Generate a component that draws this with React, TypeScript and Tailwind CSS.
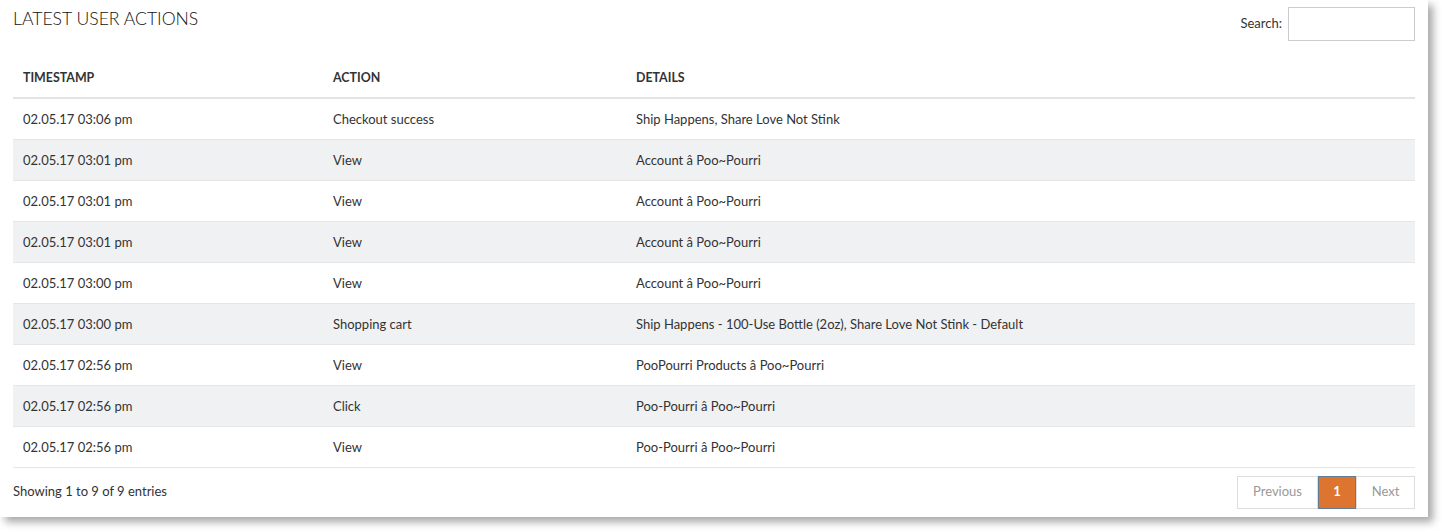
const rows = [
  ["02.05.17 03:06 pm", "Checkout success", "Ship Happens, Share Love Not Stink"],
  ["02.05.17 03:01 pm", "View", "Account â Poo~Pourri"],
  ["02.05.17 03:01 pm", "View", "Account â Poo~Pourri"],
  ["02.05.17 03:01 pm", "View", "Account â Poo~Pourri"],
  ["02.05.17 03:00 pm", "View", "Account â Poo~Pourri"],
  ["02.05.17 03:00 pm", "Shopping cart", "Ship Happens - 100-Use Bottle (2oz), Share Love Not Stink - Default"],
  ["02.05.17 02:56 pm", "View", "PooPourri Products â Poo~Pourri"],
  ["02.05.17 02:56 pm", "Click", "Poo-Pourri â Poo~Pourri"],
  ["02.05.17 02:56 pm", "View", "Poo-Pourri â Poo~Pourri"],
];

export default function App() {
  return (
    <div className="h-[532px] w-[1442px] bg-white font-['Lato',sans-serif] text-[13px] text-[#333]">
      <div className="h-[517px] w-[1428px] bg-white px-[13px] shadow-[5px_5px_8px_rgba(0,0,0,0.35)]">
        <div className="flex h-[41px] items-start justify-between">
          <h2 className="mt-[9px] text-[17.6px] font-light leading-[20px] text-[#111]">LATEST USER ACTIONS</h2>
          <label className="mt-[7px] flex items-center gap-[6px] text-[#333]">
            Search:
            <input className="h-[34px] w-[127px] border border-[#ccc] bg-white outline-none" />
          </label>
        </div>
        <table className="w-full border-collapse">
          <thead>
            <tr className="h-[57px] border-b-2 border-[#e3e3e3] text-left">
              <th className="w-[310px] px-[10px] pt-[19px] text-[12.4px] font-bold text-[#333]">TIMESTAMP</th>
              <th className="w-[303px] px-[10px] pt-[19px] text-[12.4px] font-bold text-[#333]">ACTION</th>
              <th className="px-[10px] pt-[19px] text-[12.4px] font-bold text-[#333]">DETAILS</th>
            </tr>
          </thead>
          <tbody>
            {rows.map((r, i) => (
              <tr key={i} className={`h-[41px] border-b border-[#e6e6e6] ${i % 2 === 1 ? "bg-[#f0f1f3]" : "bg-white"}`}>
                <td className="px-[10px] pt-[2px]">{r[0]}</td>
                <td className="px-[10px] pt-[2px]">{r[1]}</td>
                <td className="px-[10px] pt-[2px]">{r[2]}</td>
              </tr>
            ))}
          </tbody>
        </table>
        <div className="mt-[7px] flex items-center justify-between">
          <div>Showing 1 to 9 of 9 entries</div>
          <div className="flex h-[34px] pt-[1px] text-[13px]">
            <span className="flex w-[81px] items-center justify-center border border-[#ddd] text-[#999]">Previous</span>
            <span className="flex w-[38px] items-center justify-center border border-[#637b93] bg-[#dd7531] font-bold text-white">1</span>
            <span className="flex w-[59px] items-center justify-center border border-[#ddd] text-[#999]">Next</span>
          </div>
        </div>
      </div>
    </div>
  );
}
